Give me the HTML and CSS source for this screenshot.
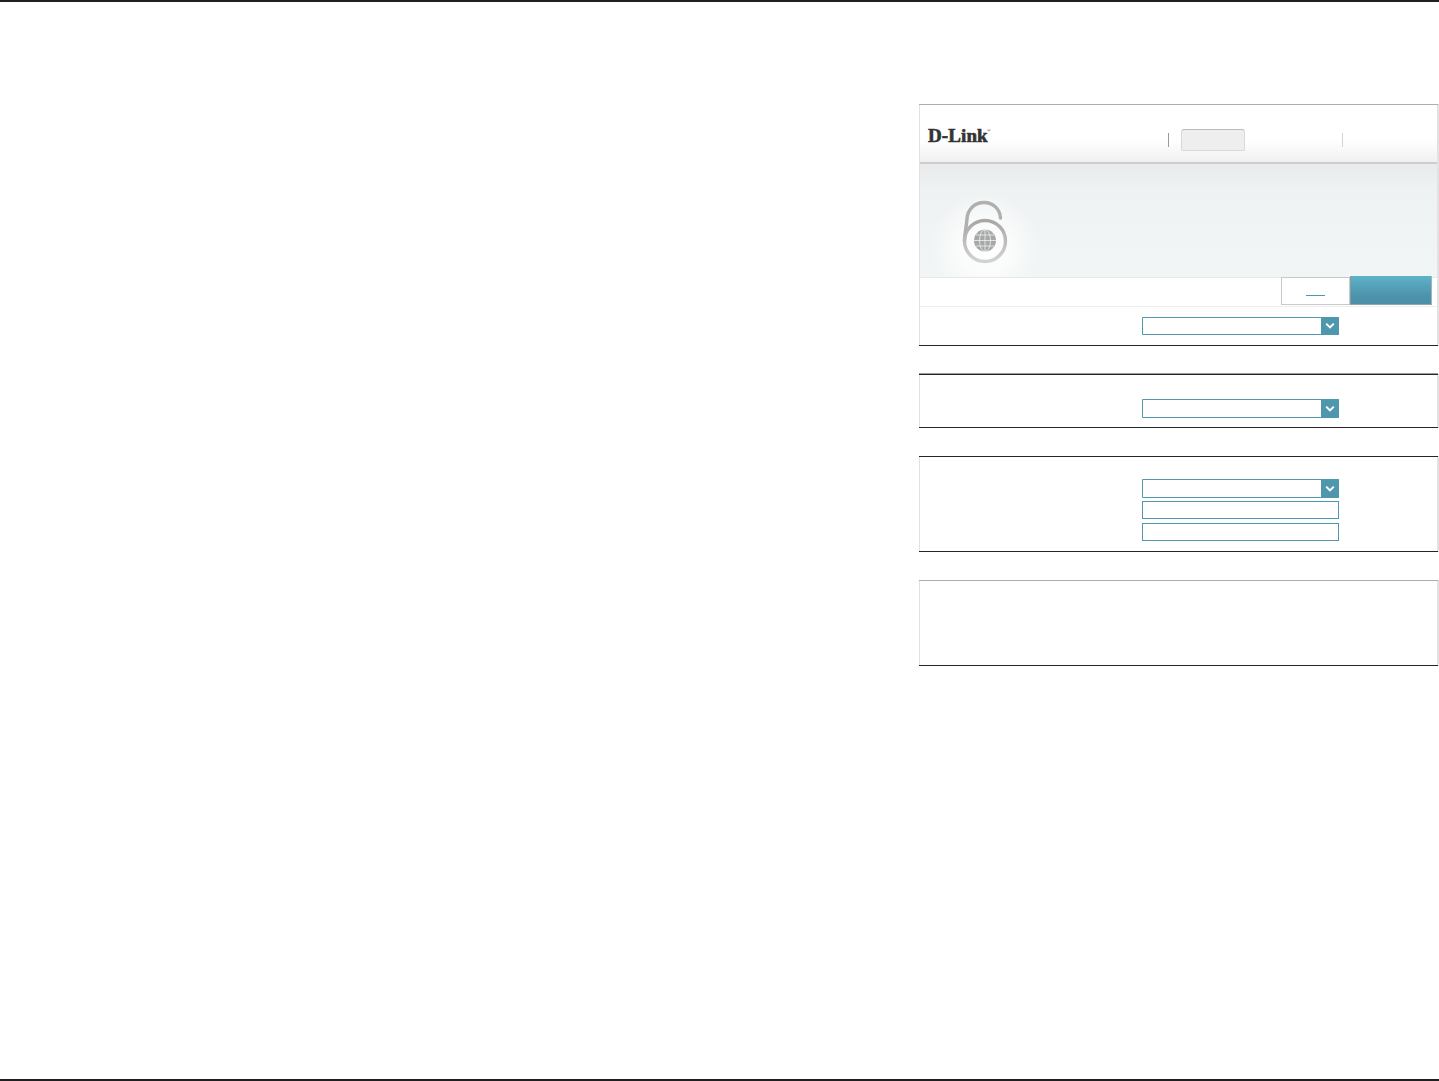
FILE: index.html
```html
<!DOCTYPE html>
<html lang="en">
<head>
<meta charset="utf-8">
<title>D-Link</title>
<link rel="stylesheet" href="styles.css">
</head>
<body>
<div class="page">
  <main class="content">
    <section class="panel panel-first">
      <header class="topbar">
        <div class="logo">D-Link<span class="logo-mark">®</span></div>
        <span class="sep sep-a"></span>
        <span class="tab"></span>
        <span class="sep sep-b"></span>
      </header>
      <div class="banner">
        <svg class="lock" width="46" height="66" viewBox="0 0 46 66" aria-hidden="true">
          <defs>
            <linearGradient id="ring" x1="0" y1="0" x2="0" y2="1">
              <stop offset="0" stop-color="#a9a7a5"/>
              <stop offset="1" stop-color="#d2d2d0"/>
            </linearGradient>
          </defs>
          <path d="M2.5 42C2.5 36 4 30 5 20C5.5 10 13 3.5 22 3.5C31 3.5 38 10 38.5 19" fill="none" stroke="#b1afad" stroke-width="3.4" stroke-linecap="round"/>
          <circle cx="23" cy="42" r="20.5" fill="none" stroke="url(#ring)" stroke-width="3.4"/>
          <circle cx="23" cy="41.5" r="11" fill="#a8a8a8"/>
          <g fill="none" stroke="#eef1f1" stroke-width="0.8">
            <ellipse cx="23" cy="41.5" rx="5.5" ry="11"/>
            <path d="M23 30.5V52.5M12 41.5H34M14 36H32M14 47H32"/>
          </g>
        </svg>
      </div>
      <div class="toolbar">
        <button class="btn-plain" type="button"><span class="btn-line"></span></button>
        <button class="btn-primary" type="button"></button>
      </div>
      <div class="fields fields-a">
        <div class="select select-short"><span class="select-arrow"><svg width="10" height="8" viewBox="0 0 10 8" aria-hidden="true"><path d="M1.2 1.6L5 5.4L8.8 1.6" fill="none" stroke="#fff" stroke-width="2"/></svg></span></div>
      </div>
    </section>

    <section class="panel panel-dark">
      <div class="fields fields-b">
        <div class="select"><span class="select-arrow"><svg width="10" height="8" viewBox="0 0 10 8" aria-hidden="true"><path d="M1.2 1.6L5 5.4L8.8 1.6" fill="none" stroke="#fff" stroke-width="2"/></svg></span></div>
      </div>
    </section>

    <section class="panel panel-darktop">
      <div class="fields fields-c">
        <div class="select"><span class="select-arrow"><svg width="10" height="8" viewBox="0 0 10 8" aria-hidden="true"><path d="M1.2 1.6L5 5.4L8.8 1.6" fill="none" stroke="#fff" stroke-width="2"/></svg></span></div>
        <input class="text-input input-first" type="text">
        <input class="text-input input-second" type="text">
      </div>
    </section>

    <section class="panel panel-last"></section>
  </main>
</div>
</body>
</html>
```

FILE: styles.css
```css
* {
  box-sizing: border-box;
}

html,
body {
  margin: 0;
  padding: 0;
  background: #fff;
  font-family: "Liberation Sans", Arial, sans-serif;
}

.page {
  height: 1081px;
  overflow: hidden;
  border-top: 2px solid #231f20;
  border-bottom: 2px solid #231f20;
}

.content {
  width: 519px;
  margin-left: 919px;
  padding-top: 102px;
}

.panel {
  padding: 0 1px;
  margin-bottom: 28px;
  border-bottom: 1px solid #262626;
  box-shadow: inset 1px 0 0 #e2e2e2, inset -1px 0 0 #e2e2e2, 1px 0 0 #e2e2e2;
}

.panel-first {
  border-top: 1px solid #adadad;
}

.panel-dark {
  border-top: 1px solid #262626;
  box-shadow: inset 1px 0 0 #e2e2e2, inset -1px 0 0 #e2e2e2, 1px 0 0 #e2e2e2, 0 -1px 0 #9a9a9a;
}

.panel-darktop {
  border-top: 1px solid #262626;
}

.panel-last {
  height: 86px;
  margin-bottom: 0;
  border-top: 1px solid #adadad;
}

.topbar {
  display: flex;
  align-items: center;
  height: 59px;
  padding: 11px 0 0 8px;
  background: linear-gradient(#fff 0, #fff 60%, #f2f0f0 96%, #cbcbcb 97%, #cfcfcf 100%);
}

.logo {
  position: relative;
  flex: none;
  width: 60px;
  margin-top: -9px;
  font-family: "Liberation Serif", "Times New Roman", serif;
  font-size: 19px;
  font-weight: 700;
  line-height: 20px;
  white-space: nowrap;
  color: #333;
  letter-spacing: 0.1px;
  -webkit-text-stroke: 0.6px #333;
}

.logo-mark {
  position: absolute;
  top: 2px;
  left: 59px;
  font-size: 5px;
  line-height: 5px;
  font-weight: 400;
  -webkit-text-stroke: 0;
}

.sep {
  flex: none;
  width: 1px;
  height: 14px;
}

.sep-a {
  margin-left: 180px;
  background: #9a9a9a;
}

.sep-b {
  margin-left: 97px;
  background: #d4d4d4;
}

.tab {
  flex: none;
  width: 64px;
  height: 22px;
  margin-left: 12px;
  background: #eeeeee;
  border: 1px solid #d8d8d8;
  border-top-color: #b9b9b9;
  border-radius: 3px 3px 2px 2px;
}

.banner {
  height: 113px;
  padding: 35px 0 0 42px;
  background:
    radial-gradient(circle 56px at 65px 84px, #ffffff 0, rgba(255, 255, 255, 0.7) 45%, rgba(255, 255, 255, 0) 100%),
    linear-gradient(#e8eaeb 0, #eff2f3 22%, #f1f5f5 100%);
}

.lock {
  display: block;
}

.toolbar {
  display: flex;
  justify-content: flex-end;
  align-items: flex-start;
  height: 30px;
  padding-right: 5px;
  background: #fff;
  border-bottom: 1px solid #ececec;
  box-shadow: inset 0 1px 0 #e8e8e8;
}

.btn-plain {
  display: flex;
  justify-content: center;
  align-items: flex-end;
  width: 69px;
  height: 28px;
  padding: 0 0 8px;
  background: #fff;
  border: 1px solid #c9c9c9;
}

.btn-line {
  display: block;
  width: 19px;
  height: 1px;
  background: #4f97ad;
}

.btn-primary {
  width: 82px;
  height: 29px;
  margin-top: -1px;
  padding: 0;
  background: linear-gradient(#5cb3ca 0, #4d93ab 70%, #4b8fa8 100%);
  border: 0;
  border-right: 1px solid #9fb6bf;
  border-bottom: 1px solid #8da4ad;
  border-left: 1px solid #8b9aa0;
}

.fields {
  display: flex;
  flex-direction: column;
  align-items: flex-start;
  padding-left: 222px;
}

.fields-a {
  height: 38px;
  padding-top: 10px;
}

.fields-b {
  height: 52px;
  padding-top: 24px;
}

.fields-c {
  height: 94px;
  padding-top: 22px;
}

.select {
  display: flex;
  justify-content: flex-end;
  width: 197px;
  height: 19px;
  background: #fff;
  border: 1px solid #4f97ad;
  border-radius: 0 1px 1px 0;
}

.select-short {
  height: 18px;
}

.select-arrow {
  display: flex;
  justify-content: center;
  align-items: center;
  width: 18px;
  margin: -1px -1px -1px 0;
  background: #4f97ad;
  border-radius: 0 1px 1px 0;
}

.select-arrow svg {
  display: block;
}

.text-input {
  display: block;
  width: 197px;
  height: 18px;
  padding: 0;
  background: #fff;
  border: 1px solid #4f97ad;
  border-radius: 0;
}

.input-first {
  margin-top: 3px;
}

.input-second {
  margin-top: 4px;
}
```
